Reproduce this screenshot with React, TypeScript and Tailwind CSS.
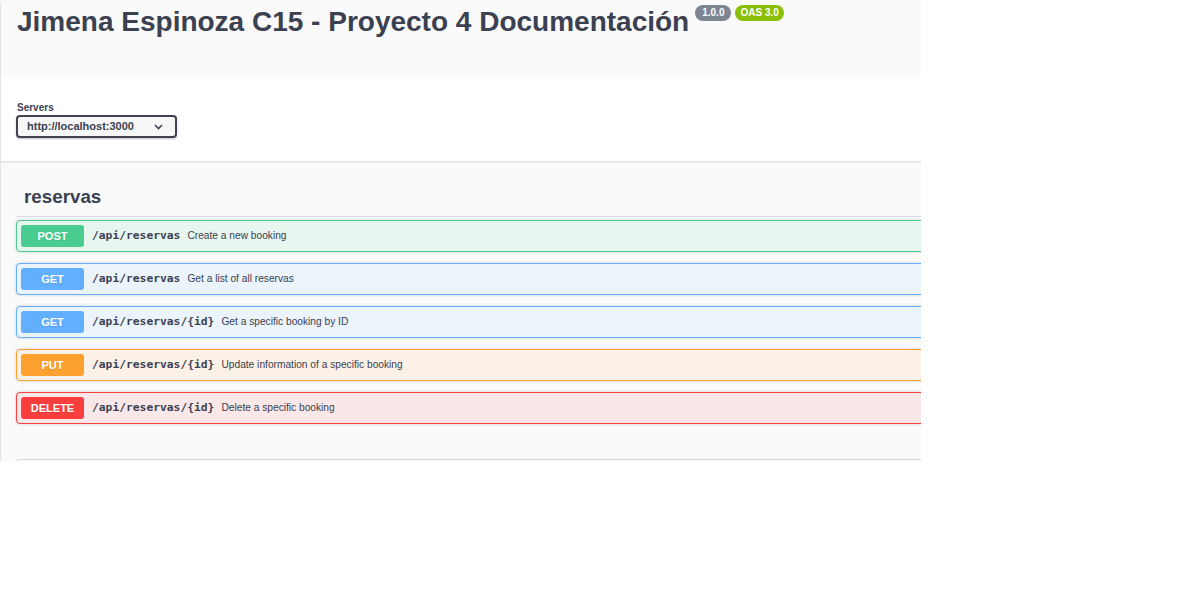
import React from "react";

const ops = [
  { m: "POST", path: "/api/reservas", desc: "Create a new booking", bg: "bg-[#e8f6f0]", border: "border-[#49cc90]", badge: "bg-[#49cc90]" },
  { m: "GET", path: "/api/reservas", desc: "Get a list of all reservas", bg: "bg-[#ebf3fb]", border: "border-[#61affe]", badge: "bg-[#61affe]" },
  { m: "GET", path: "/api/reservas/{id}", desc: "Get a specific booking by ID", bg: "bg-[#ebf3fb]", border: "border-[#61affe]", badge: "bg-[#61affe]" },
  { m: "PUT", path: "/api/reservas/{id}", desc: "Update information of a specific booking", bg: "bg-[#fbf1e6]", border: "border-[#fca130]", badge: "bg-[#fca130]" },
  { m: "DELETE", path: "/api/reservas/{id}", desc: "Delete a specific booking", bg: "bg-[#fae7e7]", border: "border-[#f93e3e]", badge: "bg-[#f93e3e]" },
];

export default function App() {
  return (
    <div className="w-[1200px] h-[616px] bg-white" style={{ fontFamily: '"Liberation Sans", Arial, sans-serif' }}>
      <div className="w-[921px] h-[461px] overflow-hidden border-l border-[#e4e4e4] rounded-tl-[4px]">
        {/* info */}
        <div className="h-[77px] bg-[#fafafa] pl-[16px] pt-[4px] flex items-start">
          <h1 className="text-[28px] font-bold text-[#3b4151] leading-[36px] whitespace-nowrap">
            Jimena Espinoza C15 - Proyecto 4 Documentación
          </h1>
          <div className="flex gap-[4px] mt-[1px] ml-[6px]">
            <span className="h-[16px] px-[7px] rounded-full bg-[#7d8492] text-white text-[10px] font-bold leading-[16px]">1.0.0</span>
            <span className="h-[16px] px-[5px] rounded-full bg-[#89bf04] text-white text-[10px] font-bold leading-[16px]">OAS 3.0</span>
          </div>
        </div>
        {/* servers */}
        <div className="h-[86px] bg-white pl-[15px] pt-[25px] border-b-2 border-[#e8e8e8]">
          <div className="text-[10px] font-bold text-[#3b4151] leading-[12px] mb-[1px] pl-[1px]">Servers</div>
          <div className="w-[161px] h-[23px] border-2 border-[#41444e] rounded-[4px] bg-[#f7f7f7] flex items-center pl-[9px] pr-[12px] justify-between shadow-[0_1px_2px_rgba(0,0,0,0.25)]">
            <span className="text-[11px] font-bold text-[#3b4151]">http://localhost:3000</span>
            <svg width="9" height="6" viewBox="0 0 9 6"><path d="M1 1l3.5 3.5L8 1" stroke="#3b4151" strokeWidth="1.6" fill="none" /></svg>
          </div>
        </div>
        {/* tag section */}
        <div className="bg-[#fafafa] h-[298px] pl-[15px] pt-[20px]">
          <div className="w-[950px] border-b border-[#d8dde7] pl-[8px] pb-[5px]">
            <h3 className="text-[18.8px] font-bold text-[#3b4151] leading-[28px]">reservas</h3>
          </div>
          <div className="flex flex-col gap-[11px] mt-[3px]">
            {ops.map((o, i) => (
              <div key={i} className={`w-[950px] h-[32px] border ${o.border} ${o.bg} rounded-[4px] flex items-center pl-[4px] shadow-[0_0_3px_rgba(0,0,0,0.19)]`}>
                <div className={`w-[63px] h-[22px] ${o.badge} rounded-[3px] text-white text-[11px] font-bold flex items-center justify-center`} style={{ textShadow: "0 1px 0 rgba(0,0,0,0.1)" }}>
                  {o.m}
                </div>
                <span className="ml-[8px] text-[11.3px] font-bold text-[#3b4151]" style={{ fontFamily: '"DejaVu Sans Mono", monospace' }}>{o.path}</span>
                <span className="ml-[7px] text-[10.2px] text-[#3b4151]">{o.desc}</span>
              </div>
            ))}
          </div>
          <div className="w-[950px] mt-[35px] h-[10px] border-t border-l border-[#d8d8d8] rounded-tl-[4px]" />
        </div>
      </div>
    </div>
  );
}
